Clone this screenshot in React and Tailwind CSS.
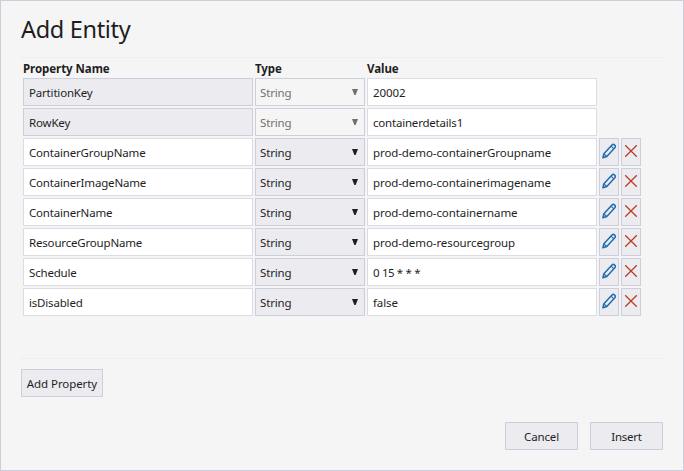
const rows = [
  { name: "PartitionKey", value: "20002", locked: true, spacing: "tracking-[-0.1px]" },
  { name: "RowKey", value: "containerdetails1", locked: true, spacing: "tracking-[-0.2px]" },
  { name: "ContainerGroupName", value: "prod-demo-containerGroupname" },
  { name: "ContainerImageName", value: "prod-demo-containerimagename" },
  { name: "ContainerName", value: "prod-demo-containername" },
  { name: "ResourceGroupName", value: "prod-demo-resourcegroup" },
  { name: "Schedule", value: "0 15 * * *", spacing: "tracking-[-0.65px] [word-spacing:0.7px]" },
  { name: "isDisabled", value: "false" },
];

function Pencil() {
  return (
    <svg width="14" height="16" viewBox="0 0 14 16" fill="none" stroke="#1f6cb0" strokeWidth="1.5" strokeLinejoin="round">
      <path d="M0.9 14.8 L1.9 10.8 L10 2 C11.6 0.3 14.4 2.8 12.8 4.7 L4.8 13.5 Z" />
      <path d="M1.9 10.8 L4.8 13.5 M9 3.1 L11.9 5.8" strokeWidth="1.1" />
    </svg>
  );
}

function Cross() {
  return (
    <svg width="12" height="12" viewBox="0 0 12 12" fill="none" stroke="#b83a20" strokeWidth="1.25">
      <path d="M0.2 0.2 L11.8 11.8 M11.8 0.2 L0.2 11.8" />
    </svg>
  );
}

function Row({ name, value, locked, spacing = "tracking-[-0.09px]" }) {
  return (
    <div className="flex h-7 gap-0.5">
      <div className={`flex w-[230px] items-center border pt-px pl-[5px] tracking-[-0.18px] ${locked ? "border-[#cccedb] bg-[#ecebf0]" : "border-[#dcdce6] bg-white"}`}>
        {name}
      </div>
      <div className={`flex w-[110px] items-center justify-between border border-[#cccedb] pt-px pr-[6px] pl-1 tracking-[-0.15px] ${locked ? "bg-[#f5f5f5] text-[#717171]" : "bg-[#ecebf0]"}`}>
        <span>String</span>
        <svg className="-mt-[2px]" width="6" height="6" viewBox="0 0 6 6" fill="currentColor">
          <path d="M0 0 H6 L3.6 6 H2.4 Z" />
        </svg>
      </div>
      <div className={`flex w-[230px] items-center border border-[#dcdce6] bg-white pt-px pl-[5px] ${spacing}`}>{value}</div>
      {!locked && (
        <>
          <button className="flex w-5 justify-center border border-[#cccedb] bg-[#ecebf0] pt-[4px]"><Pencil /></button>
          <button className="flex w-5 justify-center border border-[#cccedb] bg-[#ecebf0] pt-[6px]"><Cross /></button>
        </>
      )}
    </div>
  );
}

export default function App() {
  return (
    <div className="flex h-[471px] w-[684px] flex-col border border-[#cccedb] bg-[#f5f5f5] px-5 font-['Noto_Sans',sans-serif] text-[11.5px] leading-4 whitespace-nowrap text-[#1e1e1e]">
      <h1 className="h-14 pt-[12px] text-[23.5px] leading-8 tracking-[-0.32px]">Add Entity</h1>
      <div className="h-px shrink-0 bg-[#eeeef0]" />
      <div className="flex h-5 gap-0.5 pt-[3px] pl-0.5 font-bold tracking-[-0.06px]">
        <div className="w-[230px]">Property Name</div>
        <div className="w-[110px]">Type</div>
        <div>Value</div>
      </div>
      <div className="flex flex-col gap-0.5 pl-0.5">
        {rows.map((r) => <Row key={r.name} {...r} />)}
      </div>
      <div className="mt-[42px] h-px shrink-0 bg-[#eeeef0]" />
      <button className="mt-[10px] h-7 w-[82px] shrink-0 border border-[#cccedb] bg-[#ecebf0] pt-px tracking-[-0.08px]">Add Property</button>
      <div className="mt-[25px] flex justify-end gap-3">
        <button className="h-7 w-[73px] border border-[#cccedb] bg-[#ecebf0] pt-px tracking-[-0.15px]">Cancel</button>
        <button className="h-7 w-[73px] border border-[#cccedb] bg-[#ecebf0] pt-px tracking-[-0.25px]">Insert</button>
      </div>
    </div>
  );
}
